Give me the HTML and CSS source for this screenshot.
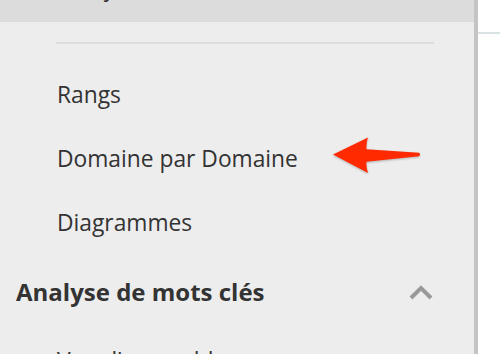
FILE: index.html
```html
<html>

<head>
  <meta charset="utf8">
  <title>Menu</title>
  <link rel="stylesheet" href="styles.css">
</head>

<body>
  <div class="layout">
    <nav class="sidebar">
      <div class="active"><span class="label">Analyse de trafic</span></div>
      <hr class="divider">
      <ul class="items">
        <li>Rangs</li>
        <li>Domaine par Domaine</li>
        <li>Diagrammes</li>
      </ul>
      <div class="group">
        <h3>Analyse de mots clés</h3>
        <svg class="chevron" width="24" height="15" viewBox="0 0 24 15">
          <path d="M2 13 L12 3 L22 13" fill="none" stroke="#999" stroke-width="4"></path>
        </svg>
      </div>
      <ul class="items">
        <li>Vue d'ensemble</li>
      </ul>
    </nav>
    <main class="content">
      <div class="rule"></div>
    </main>
  </div>
  <svg class="arrow" width="500" height="354" viewBox="0 0 500 354">
    <path d="M333 154.5 L368 137.5 Q366 143 366.5 149.3 L419 152.8 Q421 154.5 419 156.2 L366.5 161.8 Q366 167 368 173 Z"
      fill="#ff2a00"></path>
  </svg>
</body>

</html>
```

FILE: styles.css
```css
body {
  margin: 0;
  font: 22.8px "Open Sans", sans-serif;
  color: #333;
  background: #fff;
  overflow: hidden;
}

.layout {
  display: flex;
  height: 354px;
}

.sidebar {
  width: 474px;
  flex: none;
  background: #ededed;
  border-right: 4px solid #c4c4c4;
  overflow: hidden;
}

.active {
  height: 22px;
  padding-left: 57px;
  background: #dcdcdc;
  overflow: hidden;
}

.active .label {
  display: block;
  line-height: 22.5px;
  margin-top: -23.5px;
  white-space: nowrap;
}

.divider {
  margin: 20px 0 0 56px;
  width: 378px;
  height: 2px;
  border: 0;
  background: #dcdcdc;
}

.items {
  list-style: none;
  margin: 0;
  padding: 19px 0 0 57px;
}

.items li {
  height: 64px;
  line-height: 64px;
  white-space: nowrap;
}

.group {
  display: flex;
  align-items: center;
  justify-content: space-between;
  margin-top: 17px;
  padding: 0 41px 0 16px;
  height: 40px;
}

.group h3 {
  margin: 0;
  font-size: 24px;
  font-weight: bold;
  line-height: 40px;
}

.group + .items {
  padding-top: 17px;
}

.content {
  flex: 1;
}

.rule {
  margin-top: 32px;
  height: 2px;
  background: #d9e3e3;
}

.arrow {
  position: absolute;
  left: 0;
  top: 0;
  pointer-events: none;
  filter: drop-shadow(0 1px 1px rgba(0, 0, 0, 0.25));
}
```
